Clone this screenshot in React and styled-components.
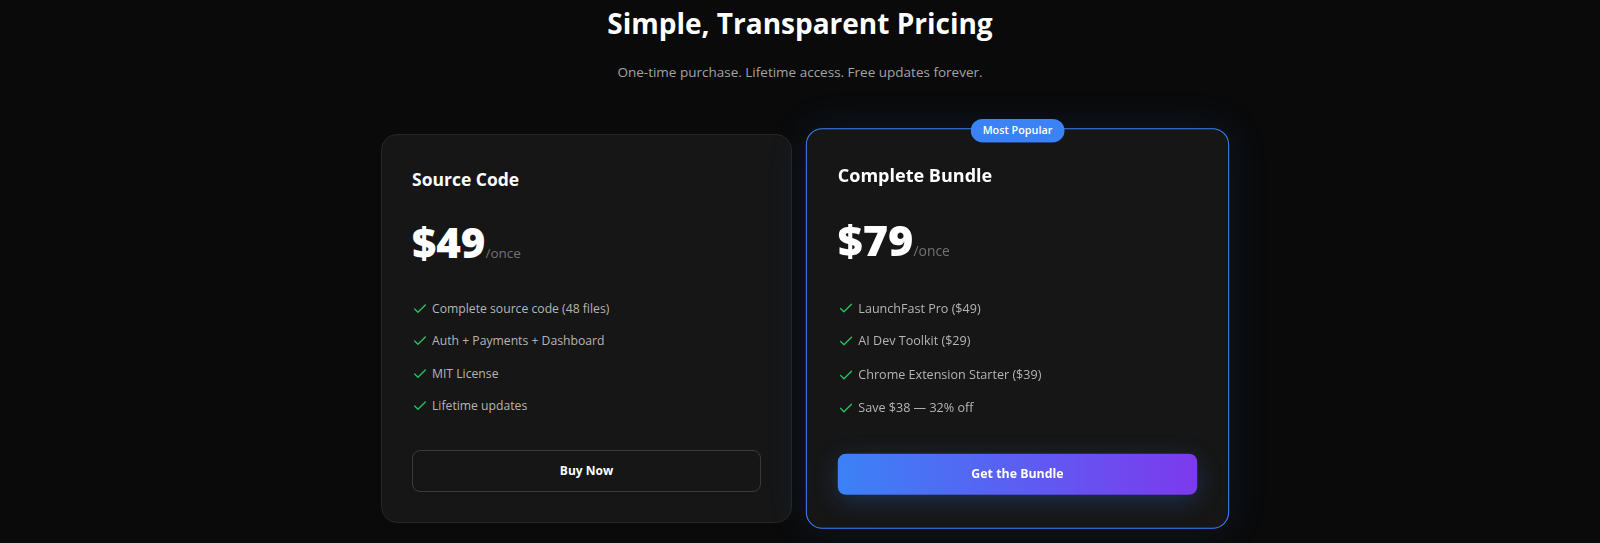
import styled, { createGlobalStyle } from "styled-components";
import { Check } from "lucide-react";

const GlobalStyle = createGlobalStyle`
  html, body {
    margin: 0;
    padding: 0;
    background: #0a0a0a;
  }
  body {
    font-family: "Open Sans", "Noto Sans", sans-serif;
    color: #fff;
  }
`;

const Page = styled.div`
  min-height: 543px;
  background: #0a0a0a;
  display: flex;
  flex-direction: column;
  align-items: center;
  padding-top: 3px;
`;

const Heading = styled.h2`
  margin: 0;
  font-size: 28px;
  line-height: 40px;
  font-weight: 700;
  color: #fff;
  text-align: center;
`;

const Subtitle = styled.p`
  margin: 17px 0 0;
  font-size: 13.5px;
  line-height: 24px;
  color: #a3a3a3;
  text-align: center;
`;

const Grid = styled.div`
  display: grid;
  grid-template-columns: 411px 411px;
  gap: 20px;
  margin-top: 50px;
  margin-left: 4px;
`;

const Card = styled.div`
  position: relative;
  display: flex;
  flex-direction: column;
  padding: 30px 30px 30px;
  border-radius: 16px;
  background: #161616;
  border: 1px solid ${({ $featured }) => ($featured ? "#3b82f6" : "#262626")};
  box-shadow: ${({ $featured }) =>
    $featured ? "0 0 40px rgba(59, 130, 246, 0.12)" : "none"};
  transform: ${({ $featured }) => ($featured ? "scale(1.03)" : "none")};
`;

const Badge = styled.div`
  position: absolute;
  top: -10px;
  left: 50%;
  transform: translateX(-50%);
  background: #3b82f6;
  color: #fff;
  font-size: 10.5px;
  font-weight: 600;
  line-height: 15px;
  padding: 4px 12px;
  border-radius: 999px;
  white-space: nowrap;
`;

const PlanName = styled.h3`
  margin: 0;
  font-size: 17.5px;
  line-height: 28px;
  font-weight: 700;
  color: #fff;
`;

const PriceRow = styled.div`
  display: flex;
  align-items: baseline;
  margin-top: 27px;
`;

const Price = styled.span`
  font-size: 42px;
  line-height: 44px;
  font-weight: 800;
  color: #fff;
`;

const Per = styled.span`
  font-size: 13.5px;
  color: #737373;
`;

const Features = styled.ul`
  list-style: none;
  margin: 35px 0 0;
  padding: 0;
  display: flex;
  flex-direction: column;
  gap: 12.3px;
`;

const Feature = styled.li`
  display: flex;
  align-items: center;
  gap: 4px;
  font-size: 12.2px;
  line-height: 20px;
  color: #b5b5b5;

  svg {
    flex-shrink: 0;
    color: #22c55e;
  }
`;

const Button = styled.button`
  margin-top: 34px;
  width: 100%;
  padding: 10px 16px;
  border-radius: 8px;
  font-family: inherit;
  font-size: 12px;
  line-height: 20px;
  font-weight: 700;
  color: #fff;
  cursor: pointer;
  border: ${({ $primary }) => ($primary ? "none" : "1px solid #3a3a3a")};
  background: ${({ $primary }) =>
    $primary ? "linear-gradient(90deg, #3b82f6, #7c3aed)" : "transparent"};
  box-shadow: ${({ $primary }) =>
    $primary ? "0 6px 24px rgba(59, 130, 246, 0.25)" : "none"};
`;

const plans = [
  {
    name: "Source Code",
    price: "$49",
    features: [
      "Complete source code (48 files)",
      "Auth + Payments + Dashboard",
      "MIT License",
      "Lifetime updates",
    ],
    cta: "Buy Now",
  },
  {
    name: "Complete Bundle",
    price: "$79",
    featured: true,
    features: [
      "LaunchFast Pro ($49)",
      "AI Dev Toolkit ($29)",
      "Chrome Extension Starter ($39)",
      "Save $38 — 32% off",
    ],
    cta: "Get the Bundle",
  },
];

export default function App() {
  return (
    <>
      <GlobalStyle />
      <Page>
        <Heading>Simple, Transparent Pricing</Heading>
        <Subtitle>One-time purchase. Lifetime access. Free updates forever.</Subtitle>
        <Grid>
          {plans.map((plan) => (
            <Card key={plan.name} $featured={plan.featured}>
              {plan.featured && <Badge>Most Popular</Badge>}
              <PlanName>{plan.name}</PlanName>
              <PriceRow>
                <Price>{plan.price}</Price>
                <Per>/once</Per>
              </PriceRow>
              <Features>
                {plan.features.map((f) => (
                  <Feature key={f}>
                    <Check size={16} strokeWidth={2} />
                    {f}
                  </Feature>
                ))}
              </Features>
              <Button $primary={plan.featured}>{plan.cta}</Button>
            </Card>
          ))}
        </Grid>
      </Page>
    </>
  );
}
